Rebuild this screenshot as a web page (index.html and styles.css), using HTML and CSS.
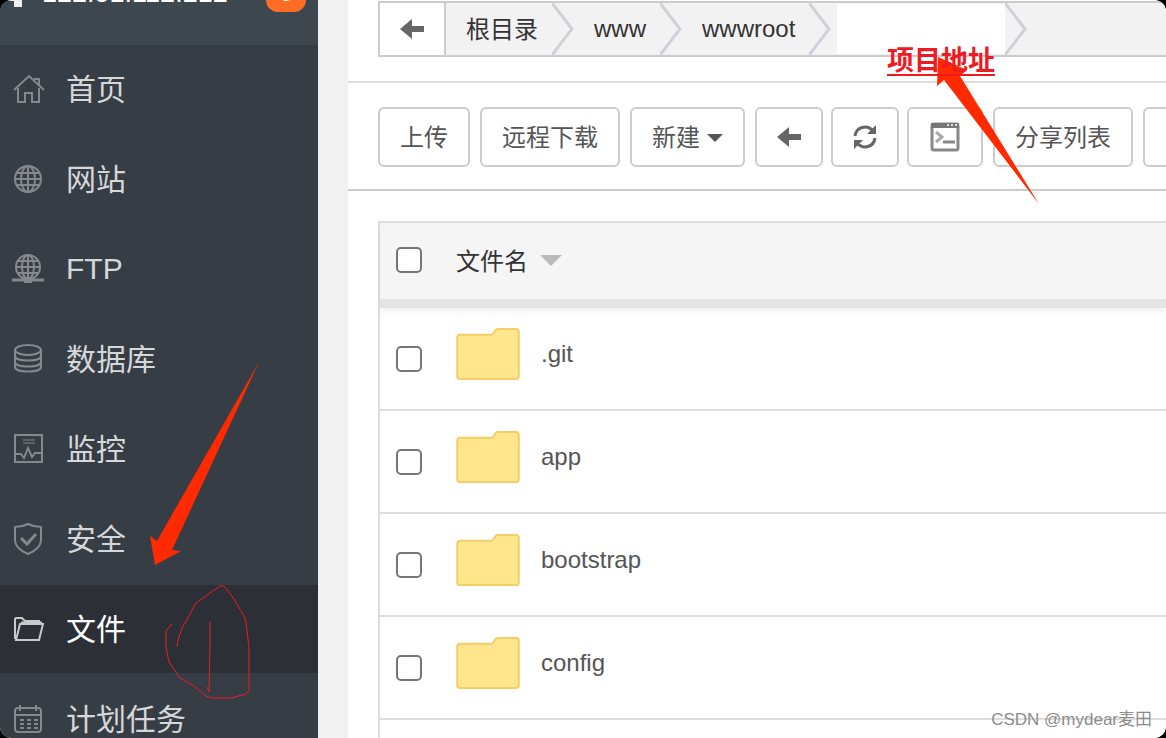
FILE: index.html
```html
<!DOCTYPE html>
<html lang="zh-CN">
<head>
    <meta charset="UTF-8">
    <meta name="viewport" content="width=device-width, initial-scale=1.0">
    <title>文件</title>
    <link rel="stylesheet" href="styles.css">
</head>
<body>

    <div class="window">
        <aside class="sidebar">
            <div class="server">
                <svg class="server-icon" width="22" height="28" viewBox="0 0 22 28"><path d="M0 0h22v28h-8v-6H0z" fill="#eee"/></svg>
                <span class="server-ip">122.51.112.212</span>
                <span class="badge">0</span>
            </div>
            <nav class="menu">
                <a href="#">
                    <svg width="32" height="32" viewBox="0 0 32 32"><path d="M1 17 16 3l15 14M5 15v14h7v-9h7v9h7V15M21 6h5v6"/></svg>
                    <span>首页</span>
                </a>
                <a href="#">
                    <svg width="32" height="32" viewBox="0 0 32 32"><circle cx="15" cy="16" r="13"/><ellipse cx="15" cy="16" rx="7" ry="13"/><path d="M15 3v26M2 16h26M4 10h22M4 22h22"/></svg>
                    <span>网站</span>
                </a>
                <a href="#">
                    <svg width="32" height="32" viewBox="0 0 32 32"><circle cx="15" cy="14" r="12"/><ellipse cx="15" cy="14" rx="6" ry="12"/><path d="M15 2v24M3 14h24M5 8h20M5 20h20"/><path d="M-1 27h32" stroke-width="3"/><path d="M11 27h8" stroke-width="6"/></svg>
                    <span class="latin">FTP</span>
                </a>
                <a href="#">
                    <svg width="32" height="32" viewBox="0 0 32 32"><ellipse cx="15" cy="7" rx="13" ry="5"/><path d="M2 7v17c0 6 26 6 26 0V7M2 13c0 6 26 6 26 0M2 19c0 6 26 6 26 0"/></svg>
                    <span>数据库</span>
                </a>
                <a href="#">
                    <svg width="32" height="32" viewBox="0 0 32 32"><path d="M2 2h27v27H2zM3 21h5l3 4 4-10 4 9 3-4h6"/><path d="M10 7h12M10 10h12" opacity=".5"/></svg>
                    <span>监控</span>
                </a>
                <a href="#">
                    <svg width="32" height="32" viewBox="0 0 32 32"><path d="M15 1c4 2 8 3 13 3v13c0 7-6 11-13 14C8 28 2 24 2 17V4c5 0 9-1 13-3z"/><path d="m8 15 6 6 9-10" stroke-width="3"/></svg>
                    <span>安全</span>
                </a>
                <a href="#" class="active">
                    <svg width="32" height="32" viewBox="0 0 32 32"><path d="M2 26V6q0-1 1-1h6l3 3h14v3M3 27 7 11h23l-4 16z"/><path d="M8 10h21" stroke-width="3"/></svg>
                    <span>文件</span>
                </a>
                <a href="#">
                    <svg width="32" height="32" viewBox="0 0 32 32"><rect x="2" y="5" width="26" height="24" rx="3"/><path d="M2 12h26M7 2v6M23 2v6"/><path d="M7 17h18M7 21h18M7 25h18" stroke-dasharray="4 3"/></svg>
                    <span>计划任务</span>
                </a>
            </nav>
        </aside>

        <main class="main">
            <div class="path-bar">
                <div class="path">
                    <button class="path-back" aria-label="返回">
                        <svg width="24" height="20" viewBox="0 0 24 20"><path d="M0 10 12 0v7h12v6H12v7z" fill="#666"/></svg>
                    </button>
                    <a href="#" class="root">根目录</a>
                    <svg class="sep" width="22" height="52" viewBox="0 0 22 52"><path d="M0 0 20 26 0 52"/></svg>
                    <a href="#">www</a>
                    <svg class="sep" width="22" height="52" viewBox="0 0 22 52"><path d="M0 0 20 26 0 52"/></svg>
                    <a href="#">wwwroot</a>
                    <svg class="sep" width="22" height="52" viewBox="0 0 22 52"><path d="M0 0 20 26 0 52"/></svg>
                    <span class="path-blank"></span>
                    <svg class="sep" width="22" height="52" viewBox="0 0 22 52"><path d="M0 0 20 26 0 52"/></svg>
                </div>
            </div>

            <div class="toolbar">
                <button>上传</button>
                <button>远程下载</button>
                <button>新建<span class="caret"></span></button>
                <div class="icon-buttons">
                    <button aria-label="后退">
                        <svg width="24" height="20" viewBox="0 0 24 20"><path d="M0 10 12 0v7h12v6H12v7z" fill="#666"/></svg>
                    </button>
                    <button aria-label="刷新">
                        <svg width="24" height="24" viewBox="0 0 24 24"><path d="M2 11C3 2 14-1 20 6M22 13c-1 9-12 12-18 5" fill="none" stroke="#666" stroke-width="3"/><path d="M23 0v9h-9zM1 24v-9h9z" fill="#666"/></svg>
                    </button>
                    <button aria-label="终端">
                        <svg width="32" height="32" viewBox="0 0 32 32"><rect x="3" y="3" width="26" height="26" rx="2" fill="#fff" stroke="#888" stroke-width="3"/><path d="M2 2h28v5H2z" fill="#777"/><path d="M18 4h2M22 4h2M26 4h2" stroke="#ddd" stroke-width="2"/><path d="m7 11 6 5-6 5" fill="none" stroke="#aaa" stroke-width="3"/><path d="M14 21h12" stroke="#888" stroke-width="3"/></svg>
                    </button>
                </div>
                <button>分享列表</button>
                <button class="more" aria-label="更多"></button>
            </div>

            <div class="file-list">
                <table>
                    <thead>
                        <tr>
                            <th class="check"><input type="checkbox" aria-label="全选"></th>
                            <th>文件名<span class="sort"></span></th>
                        </tr>
                    </thead>
                    <tbody>
                        <tr>
                            <td class="check"><input type="checkbox" aria-label=".git"></td>
                            <td class="name"><a href="#"><svg class="folder" width="64" height="52" viewBox="0 0 66 54"><path d="M4 7h32q2 0 3-2l2-3q1-1 3-1h18q3 0 3 3v46q0 3-3 3H4q-3 0-3-3V10q0-3 3-3z"/></svg><span>.git</span></a></td>
                        </tr>
                        <tr>
                            <td class="check"><input type="checkbox" aria-label="app"></td>
                            <td class="name"><a href="#"><svg class="folder" width="64" height="52" viewBox="0 0 66 54"><path d="M4 7h32q2 0 3-2l2-3q1-1 3-1h18q3 0 3 3v46q0 3-3 3H4q-3 0-3-3V10q0-3 3-3z"/></svg><span>app</span></a></td>
                        </tr>
                        <tr>
                            <td class="check"><input type="checkbox" aria-label="bootstrap"></td>
                            <td class="name"><a href="#"><svg class="folder" width="64" height="52" viewBox="0 0 66 54"><path d="M4 7h32q2 0 3-2l2-3q1-1 3-1h18q3 0 3 3v46q0 3-3 3H4q-3 0-3-3V10q0-3 3-3z"/></svg><span>bootstrap</span></a></td>
                        </tr>
                        <tr>
                            <td class="check"><input type="checkbox" aria-label="config"></td>
                            <td class="name"><a href="#"><svg class="folder" width="64" height="52" viewBox="0 0 66 54"><path d="M4 7h32q2 0 3-2l2-3q1-1 3-1h18q3 0 3 3v46q0 3-3 3H4q-3 0-3-3V10q0-3 3-3z"/></svg><span>config</span></a></td>
                        </tr>
                    </tbody>
                </table>
            </div>
        </main>

        <!-- notes drawn over the page -->
        <svg class="marks" width="1166" height="738" viewBox="0 0 1166 738">
            <path d="M938 57 967 70 960 76 1039 204 944 80 937 86z" fill="#ff2a00"/>
            <path d="M259 362 172 550 181 551 155 565 150 536 157 541z" fill="#ff2a00"/>
            <path d="M172 624 166 631V647L169 662 180 678 194 686 206 696 212 698H231L246 694 249 690V648L246 622 244 616 234 599 224 586H220L210 593 195 604 189 616 182 628 178 640 177 647M210 622V644L209 692 207 687" fill="none" stroke="#ed1c24"/>
        </svg>
        <span class="note">项目地址</span>
        <span class="watermark">CSDN @mydear麦田</span>
    </div>

</body>
</html>
```
FILE: styles.css
```css
* {
    box-sizing: border-box;
}

body {
    margin: 0;
    background-color: #000;
    font-family: "Liberation Sans", "Noto Sans CJK SC", sans-serif;
    font-size: 24px;
    color: #333;
}

a {
    color: inherit;
    text-decoration: none;
}

.window {
    position: relative;
    display: flex;
    height: 100vh;
    overflow: hidden;
    border-radius: 12px;
    background-color: #f1f1f1;
}

.sidebar {
    flex: none;
    width: 318px;
    background-color: #373d45;
}

.server {
    display: flex;
    align-items: flex-end;
    height: 45px;
    padding-bottom: 33px;
    background-color: #3e464e;
    color: #fff;
}

.server-icon {
    flex: none;
    margin-bottom: 5px;
}

.server-ip {
    flex: 1;
    padding-left: 20px;
    font-size: 27px;
    line-height: 38px;
}

.badge {
    width: 40px;
    height: 32px;
    margin-right: 12px;
    border-radius: 12px;
    background-color: #ff6c23;
    font-size: 24px;
    line-height: 26px;
    text-align: center;
}

.menu {
    display: flex;
    flex-direction: column;
    gap: 2px;
}

.menu a {
    display: flex;
    align-items: center;
    gap: 21px;
    height: 88px;
    padding-left: 13px;
    font-size: 30px;
    color: #d6d7d9;
}

.menu span {
    padding-bottom: 5px;
}

.menu .latin {
    padding-bottom: 0;
}

.menu svg {
    overflow: visible;
    fill: none;
    stroke: #85888c;
    stroke-width: 2;
}

.menu .active {
    background-color: #2c3036;
    color: #fff;
}

.menu .active svg {
    stroke: #c8c9cb;
}

.main {
    display: flex;
    flex: 1;
    flex-direction: column;
    min-width: 0;
    margin-left: 30px;
    overflow: hidden;
    background-color: #fff;
}

.path-bar {
    padding: 1px 0 24px 30px;
    border-bottom: 2px solid #ddd;
}

.path {
    display: flex;
    align-items: center;
    height: 56px;
    border: 2px solid #ccc;
    border-right: 0;
    background-color: #f2f2f2;
}

.path-back {
    display: flex;
    align-items: center;
    justify-content: center;
    width: 66px;
    height: 52px;
    padding: 0;
    border: 0;
    border-right: 2px solid #ccc;
    background-color: #fff;
}

.path a {
    padding: 0 14px 0 20px;
}

.path .root {
    padding-bottom: 4px;
}

.sep {
    fill: none;
    stroke: #d0d0da;
    stroke-width: 3;
}

.path-blank {
    width: 168px;
    height: 50px;
    margin-left: 6px;
    background-color: #fff;
}

.toolbar {
    display: flex;
    gap: 10px;
    padding: 24px 0 22px 30px;
    border-bottom: 2px solid #ccc;
}

.toolbar button {
    display: flex;
    flex: none;
    align-items: center;
    justify-content: center;
    height: 60px;
    padding: 0 20px 4px;
    border: 2px solid #ccc;
    border-radius: 6px;
    background-color: #fff;
    font: inherit;
    color: #555;
}

.toolbar .icon-buttons {
    display: flex;
    flex: none;
    gap: 8px;
}

.toolbar .icon-buttons button {
    padding-bottom: 0;
}

.toolbar .more {
    width: 92px;
}

.caret {
    margin: 6px 0 0 7px;
    border: 8px solid transparent;
    border-top-color: #555;
    border-bottom: 0;
}

.file-list {
    flex: 1;
    margin: 30px 0 0 30px;
    border-top: 2px solid #ddd;
    border-left: 2px solid #ddd;
}

table {
    width: 100%;
    border-spacing: 0;
}

thead {
    box-shadow: 0 4px 6px rgba(0, 0, 0, 0.06);
}

th {
    height: 85px;
    padding: 0 0 3px;
    background-color: #f5f5f5;
    border-bottom: 9px solid #e4e4e4;
    font-weight: normal;
    text-align: left;
}

td {
    height: 103px;
    padding: 0;
    border-bottom: 2px solid #ddd;
}

.name {
    padding-bottom: 9px;
}

.check {
    width: 76px;
    padding-left: 16px;
}

input {
    display: block;
    width: 26px;
    height: 26px;
    margin: 0;
    appearance: none;
    border: 2px solid #767676;
    border-radius: 5px;
    background-color: #fff;
}

.sort {
    display: inline-block;
    margin-left: 12px;
    vertical-align: 4px;
    border: 11px solid transparent;
    border-top-color: #bbb;
    border-bottom: 0;
}

td a {
    display: flex;
    align-items: center;
    gap: 21px;
    color: #555;
}

.folder {
    fill: #ffe68c;
    stroke: #f2cd68;
    stroke-width: 2;
}

.note {
    position: absolute;
    top: 49px;
    left: 887px;
    border-bottom: 2px solid #ed1c24;
    font-size: 27px;
    font-weight: bold;
    line-height: 25px;
    color: #ed1c24;
}

.marks {
    position: absolute;
    top: 0;
    left: 0;
}

.watermark {
    position: absolute;
    right: 14px;
    bottom: 8px;
    font-size: 17px;
    color: #8c8c8c;
}
```
